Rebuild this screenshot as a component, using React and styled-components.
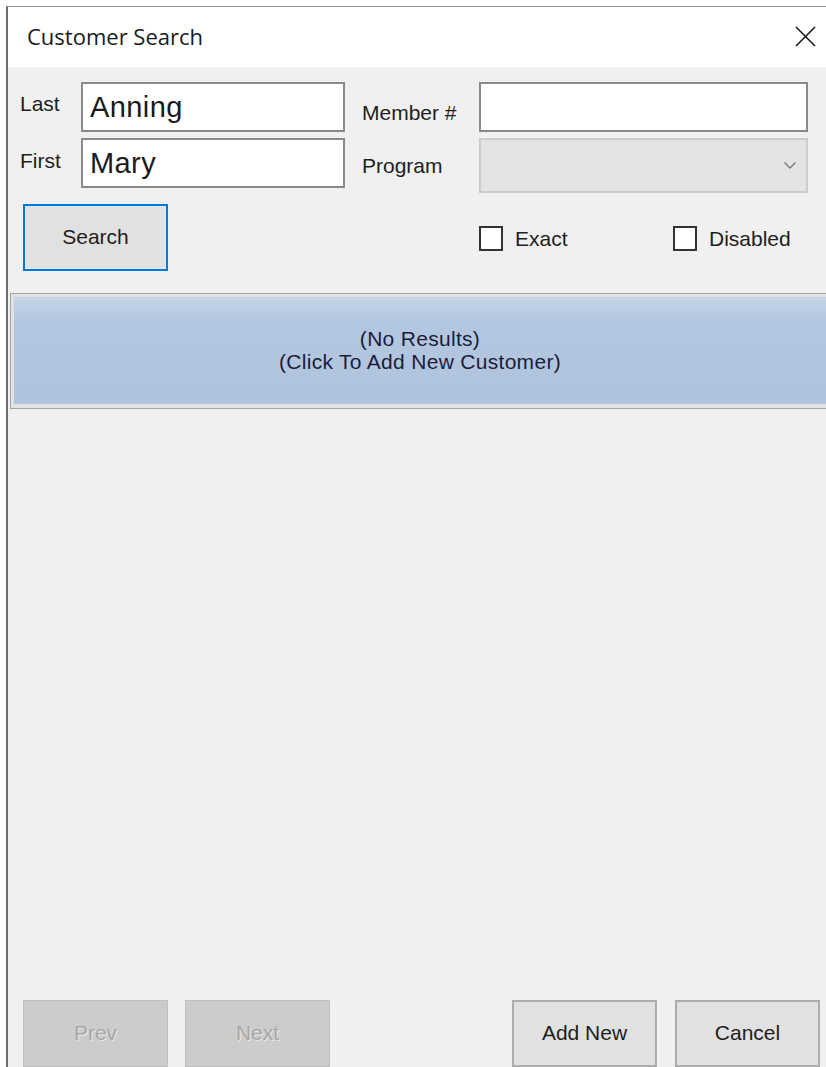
import React from "react";
import styled, { createGlobalStyle } from "styled-components";

const Global = createGlobalStyle`
  html, body {
    margin: 0;
    padding: 0;
    background: #ffffff;
    overflow: hidden;
  }
  * { box-sizing: border-box; }
`;

const UI = `"Liberation Sans", Arial, sans-serif`;

const Window = styled.div`
  margin: 6px 0 0 6px;
  width: 820px;
  border-left: 2px solid #6d6d6d;
  border-top: 1px solid #8f8f8f;
  display: flex;
  flex-direction: column;
  font-family: ${UI};
`;

const TitleBar = styled.div`
  height: 60px;
  background: #ffffff;
  display: flex;
  align-items: center;
  justify-content: space-between;
  padding: 0 9px 0 19px;
`;

const Title = styled.span`
  font-family: "Open Sans", "Noto Sans", sans-serif;
  font-size: 22px;
  color: #1a1a1a;
  margin-top: -3px;
`;

const CloseButton = styled.button`
  width: 24px;
  height: 24px;
  padding: 0;
  border: 0;
  background: transparent;
  display: flex;
  align-items: center;
  justify-content: center;
  margin-top: -1px;
`;

const Body = styled.div`
  height: 1012px;
  background: #f0f0f0;
  display: flex;
  flex-direction: column;
  padding: 15px 0 12px 0;
`;

const FormGrid = styled.div`
  display: grid;
  grid-template-columns: 61px 264px 134px 329px;
  grid-template-rows: 50px 55px;
  row-gap: 6px;
  padding-left: 12px;
  align-items: start;
`;

const FieldLabel = styled.label`
  font-size: 21px;
  line-height: 24px;
  color: #1e1e1e;
  padding-top: ${(p) => p.$top}px;
  padding-left: ${(p) => p.$left || 0}px;
  white-space: nowrap;
`;

const TextBox = styled.input`
  width: 100%;
  height: 50px;
  border: 2px solid #8a8a8a;
  background: #ffffff;
  padding: 0 7px;
  font-family: ${UI};
  font-size: 29px;
  color: #1a1a1a;
  outline: none;
  letter-spacing: 0.4px;
`;

const ComboBox = styled.div`
  height: 55px;
  border: 2px solid #cccccc;
  background: #e3e3e3;
  display: flex;
  align-items: center;
  justify-content: flex-end;
  padding-right: 9px;
`;

const ActionRow = styled.div`
  display: flex;
  align-items: center;
  margin-top: 11px;
  padding-left: 15px;
`;

const Button = styled.button`
  width: 145px;
  height: 67px;
  font-family: ${UI};
  font-size: 21px;
  color: #1e1e1e;
  background: #e1e1e1;
  border: 2px solid ${(p) => (p.$focused ? "#0078d7" : "#adadad")};
  box-shadow: ${(p) => (p.$focused ? "inset 0 0 0 1px #dcecfb" : "none")};
  padding: 0 0 2px 0;
  margin-right: ${(p) => p.$gap || 0}px;

  &:disabled {
    background: #cccccc;
    border: 1px solid #bfbfbf;
    color: #a8a8a8;
    text-shadow: 1px 1px 0 #e8e8e8;
  }
`;

const CheckOption = styled.label`
  display: flex;
  align-items: center;
  gap: 12px;
  width: ${(p) => (p.$width ? `${p.$width}px` : "auto")};
  margin-left: ${(p) => p.$offset || 0}px;
  font-size: 21px;
  color: #1e1e1e;
  padding-top: 2px;
`;

const CheckBox = styled.span`
  width: 24px;
  height: 25px;
  border: 2px solid #333333;
  background: #ffffff;
  display: inline-block;
`;

const ResultsBand = styled.div`
  margin: 22px 0 0 2px;
  height: 116px;
  border: 1px solid #a5a5a5;
  border-right: 0;
  padding: 3px 0 4px 3px;
  background: #e2e2e2;
`;

const ResultsInner = styled.div`
  height: 100%;
  background: linear-gradient(to bottom, #c6d4e7 0%, #b3c7e0 22%, #afc3dd 100%);
  display: flex;
  flex-direction: column;
  align-items: center;
  justify-content: center;
  font-size: 21px;
  line-height: 23px;
  color: #1c1c3a;
  text-align: center;
  padding-bottom: 2px;
  cursor: pointer;
`;

const ResultsLine = styled.span`
  display: block;
  letter-spacing: 0.3px;
`;

const Spacer = styled.div`
  flex: 1;
`;

const Footer = styled.div`
  display: flex;
  align-items: flex-end;
  padding-left: 15px;
`;

const FooterGap = styled.div`
  flex: 0 0 182px;
`;

function Chevron() {
  return (
    <svg width="14" height="9" viewBox="0 0 14 9" fill="none">
      <path d="M1.5 1.5 L7 7 L12.5 1.5" stroke="#7a7a7a" strokeWidth="1.4" />
    </svg>
  );
}

function CloseIcon() {
  return (
    <svg width="21" height="21" viewBox="0 0 21 21" fill="none">
      <path d="M1 1 L20 20 M20 1 L1 20" stroke="#111111" strokeWidth="1.5" />
    </svg>
  );
}

export default function App() {
  return (
    <>
      <Global />
      <Window>
        <TitleBar>
          <Title>Customer Search</Title>
          <CloseButton aria-label="Close">
            <CloseIcon />
          </CloseButton>
        </TitleBar>
        <Body>
          <FormGrid>
            <FieldLabel $top={10}>Last</FieldLabel>
            <TextBox defaultValue="Anning" />
            <FieldLabel $top={19} $left={17}>Member #</FieldLabel>
            <TextBox defaultValue="" />
            <FieldLabel $top={11}>First</FieldLabel>
            <TextBox defaultValue="Mary" />
            <FieldLabel $top={16} $left={17}>Program</FieldLabel>
            <ComboBox>
              <Chevron />
            </ComboBox>
          </FormGrid>

          <ActionRow>
            <Button $focused>Search</Button>
            <CheckOption $offset={311} $width={194}>
              <CheckBox />
              Exact
            </CheckOption>
            <CheckOption>
              <CheckBox />
              Disabled
            </CheckOption>
          </ActionRow>

          <ResultsBand>
            <ResultsInner>
              <ResultsLine>(No Results)</ResultsLine>
              <ResultsLine>(Click To Add New Customer)</ResultsLine>
            </ResultsInner>
          </ResultsBand>

          <Spacer />

          <Footer>
            <Button disabled $gap={17}>Prev</Button>
            <Button disabled>Next</Button>
            <FooterGap />
            <Button $gap={18}>Add New</Button>
            <Button>Cancel</Button>
          </Footer>
        </Body>
      </Window>
    </>
  );
}
